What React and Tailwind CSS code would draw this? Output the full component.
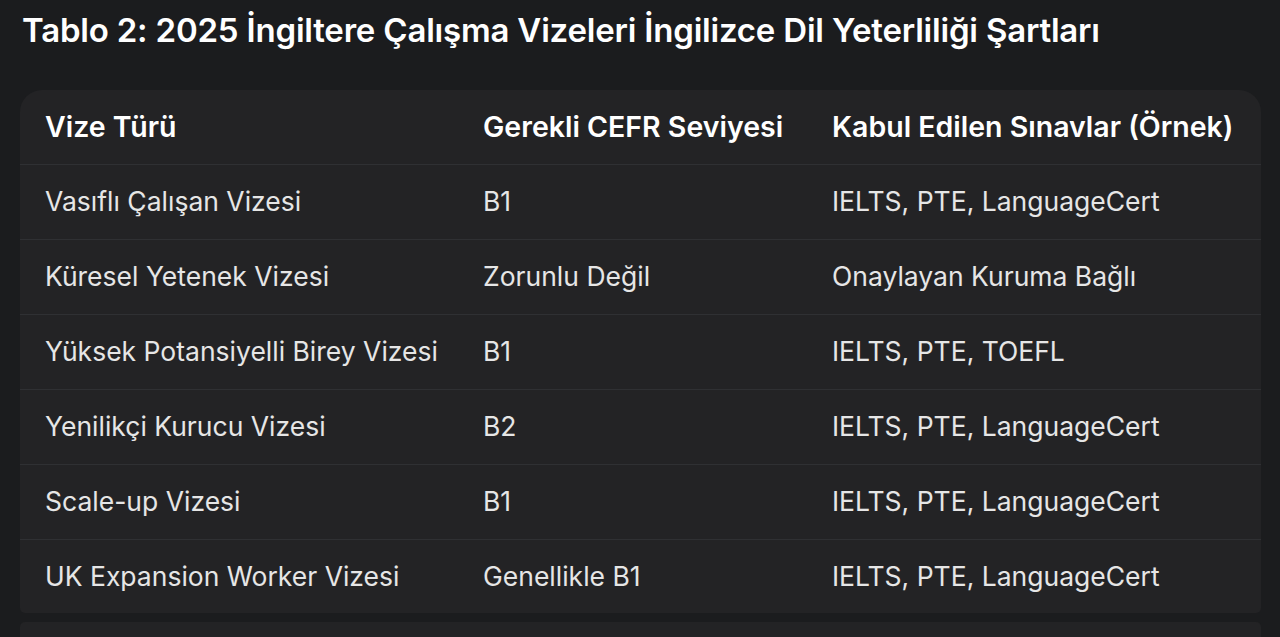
const rows = [
  ["Vasıflı Çalışan Vizesi", "B1", "IELTS, PTE, LanguageCert"],
  ["Küresel Yetenek Vizesi", "Zorunlu Değil", "Onaylayan Kuruma Bağlı"],
  ["Yüksek Potansiyelli Birey Vizesi", "B1", "IELTS, PTE, TOEFL"],
  ["Yenilikçi Kurucu Vizesi", "B2", "IELTS, PTE, LanguageCert"],
  ["Scale-up Vizesi", "B1", "IELTS, PTE, LanguageCert"],
  ["UK Expansion Worker Vizesi", "Genellikle B1", "IELTS, PTE, LanguageCert"],
];

const App = () => {
  return (
    <div
      className="h-[637px] overflow-hidden bg-[#1b1c1e] text-[#e6e6e6]"
      style={{ fontFamily: "Inter, Roboto, sans-serif" }}
    >
      <h1 className="pl-[22px] pt-[10px] text-[33px] font-semibold leading-[40px] tracking-[-0.2px] text-white">
        Tablo 2: 2025 İngiltere Çalışma Vizeleri İngilizce Dil Yeterliliği Şartları
      </h1>

      <div className="ml-[20px] mt-[40px] w-[1241px] rounded-t-[22px] rounded-b-[5px] bg-[#232325]">
        <div className="grid h-[75px] grid-cols-[438px_349px_1fr] items-center border-b border-[#2f3033] pl-[25px] text-[28.5px] font-semibold text-white">
          <div>Vize Türü</div>
          <div>Gerekli CEFR Seviyesi</div>
          <div>Kabul Edilen Sınavlar (Örnek)</div>
        </div>
        {rows.map((r, i) => (
          <div
            key={i}
            className={
              "grid grid-cols-[438px_349px_1fr] items-center pl-[25px] text-[26.5px] " +
              (i < rows.length - 1 ? "h-[75px] border-b border-[#2f3033]" : "h-[73px]")
            }
          >
            <div>{r[0]}</div>
            <div>{r[1]}</div>
            <div>{r[2]}</div>
          </div>
        ))}
      </div>

      <div className="ml-[20px] mt-[9px] h-[40px] w-[1241px] rounded-[5px] bg-[#232325]"></div>
    </div>
  );
};

export default App;
